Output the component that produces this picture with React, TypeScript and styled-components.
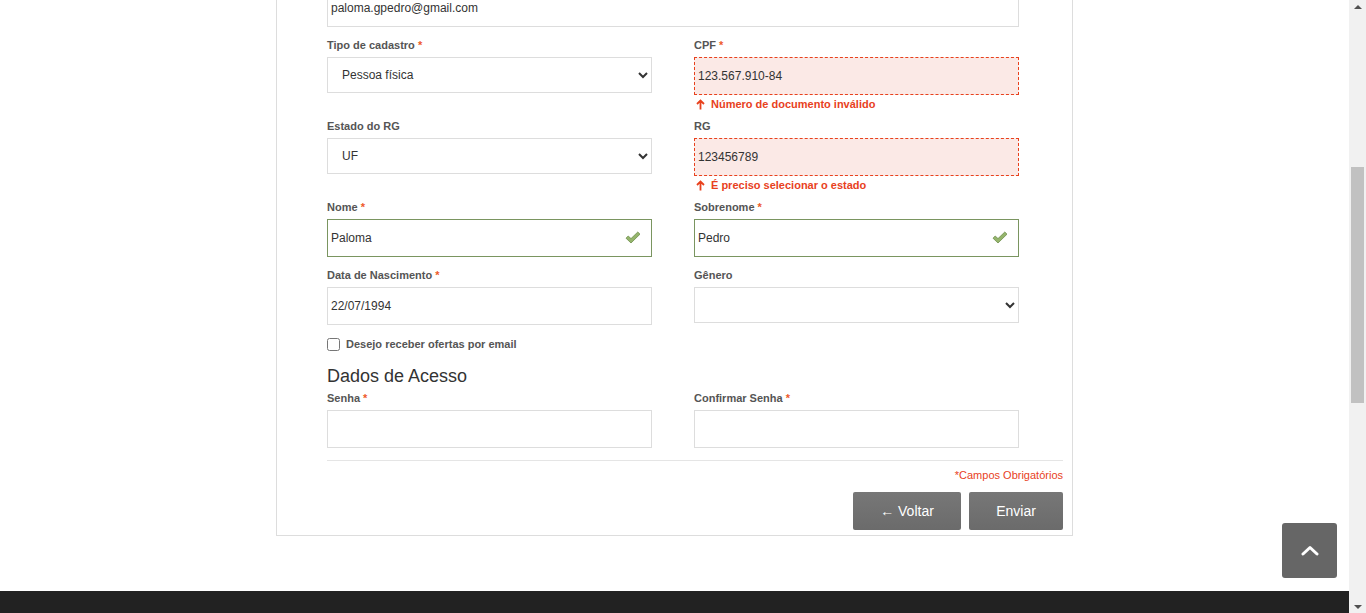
import styled, { createGlobalStyle } from "styled-components";

const GlobalStyle = createGlobalStyle`
  html, body {
    margin: 0;
    padding: 0;
    height: 613px;
    overflow: hidden;
    background: #fff;
    font-family: "Liberation Sans", Arial, sans-serif;
  }
  * { box-sizing: border-box; }
`;

const Page = styled.div`
  display: flex;
  height: 613px;
`;

const Main = styled.div`
  flex: 1;
  display: flex;
  flex-direction: column;
  overflow: hidden;
  position: relative;
`;

const Content = styled.div`
  flex: 1;
  display: flex;
  justify-content: center;
  align-items: flex-start;
  overflow: hidden;
`;

const Footer = styled.footer`
  height: 22px;
  background: #222;
`;

const ScrollTrack = styled.div`
  width: 17px;
  background: #f1f1f1;
  display: flex;
  flex-direction: column;
  align-items: center;
  padding: 5px 0 4px;
`;

const ScrollArrow = styled.div<{ $down?: boolean }>`
  width: 0;
  height: 0;
  border-left: 4px solid transparent;
  border-right: 4px solid transparent;
  ${(p) =>
    p.$down
      ? "border-top: 4px solid #505050; margin-top: auto;"
      : "border-bottom: 4px solid #505050;"}
`;

const ScrollThumb = styled.div`
  width: 13px;
  height: 236px;
  background: #c1c1c1;
  margin-top: 158px;
`;

/* scrolled card: top edge is above the viewport */
const Card = styled.div`
  width: 797px;
  margin-top: -50px;
  border: 1px solid #ddd;
  border-top: none;
  padding: 39px 9px 5px 50px;
  background: #fff;
`;

const Grid = styled.div`
  display: grid;
  grid-template-columns: 367px 1fr;
`;

const Field = styled.div<{ $wide?: boolean }>`
  margin-bottom: 11px;
  ${(p) => (p.$wide ? "grid-column: 1 / span 2;" : "")}
`;

const Label = styled.div`
  font-size: 11px;
  line-height: 14px;
  font-weight: bold;
  color: #555;
  margin-bottom: 5px;
`;

const Req = styled.span`
  color: #ee5a2a;
`;

const InputWrap = styled.div`
  position: relative;
  width: 325px;
`;

const TextInput = styled.input<{ $state?: "error" | "ok"; $wide?: boolean }>`
  display: block;
  width: ${(p) => (p.$wide ? "692px" : "325px")};
  height: 38px;
  padding: 0 3px;
  font-family: "Liberation Sans", Arial, sans-serif;
  font-size: 12px;
  color: #333;
  outline: none;
  border: 1px solid #ddd;
  background: #fff;
  ${(p) =>
    p.$state === "error"
      ? "border: 1px dashed #e8411d; background: #fbe9e6;"
      : p.$state === "ok"
      ? "border: 1px solid #7a9560;"
      : ""}
`;

const Select = styled.select<{ $pad?: number }>`
  display: block;
  width: 325px;
  height: 36px;
  padding: 0 6px 0 ${(p) => p.$pad ?? 10}px;
  font-family: "Liberation Sans", Arial, sans-serif;
  font-size: 12px;
  color: #333;
  border: 1px solid #ddd;
  border-radius: 0;
  background: #fff;
  outline: none;
`;

const Check = styled.svg`
  position: absolute;
  right: 11px;
  top: 12px;
`;

const Error = styled.div`
  display: flex;
  align-items: center;
  gap: 6px;
  font-size: 11px;
  line-height: 14px;
  font-weight: bold;
  color: #e8411d;
  margin-top: 2px;
  margin-bottom: -3px;
  padding-left: 2px;
`;

const CheckRow = styled.label`
  display: flex;
  align-items: center;
  gap: 6px;
  font-size: 11px;
  font-weight: bold;
  color: #555;
  margin-top: 1px;
  height: 14px;
  input {
    margin: 0;
    width: 13px;
    height: 13px;
  }
`;

const Section = styled.h2`
  font-size: 18px;
  line-height: 20px;
  font-weight: normal;
  color: #333;
  margin: 15px 0 5px;
`;

const Rule = styled.hr`
  border: none;
  border-top: 1px solid #e5e5e5;
  margin: 1px 0 7px;
`;

const Note = styled.div`
  text-align: right;
  font-size: 11px;
  line-height: 14px;
  color: #e8411d;
`;

const Actions = styled.div`
  display: flex;
  justify-content: flex-end;
  gap: 8px;
  margin-top: 10px;
`;

const Button = styled.button<{ $w: number }>`
  width: ${(p) => p.$w}px;
  height: 38px;
  border: none;
  border-radius: 2px;
  background: linear-gradient(#777, #6b6b6b);
  color: #fff;
  font-family: "Liberation Sans", Arial, sans-serif;
  font-size: 14px;
  cursor: pointer;
`;

const ToTop = styled.button`
  position: absolute;
  right: 12px;
  bottom: 35px;
  width: 55px;
  height: 55px;
  border: none;
  border-radius: 3px;
  background: #666;
  display: flex;
  align-items: center;
  justify-content: center;
`;

const CheckIcon = () => (
  <Check width="16" height="13" viewBox="0 0 16 13">
    <path
      d="M1 7.2 L3.2 5 L6 7.6 L12.8 1 L15 3.2 L6 12 Z"
      fill="#95b56c"
      stroke="#6f8f4c"
      strokeWidth="0.8"
      strokeLinejoin="round"
    />
  </Check>
);

const UpArrow = () => (
  <svg width="9" height="11" viewBox="0 0 9 11">
    <path d="M4.5 10.5 V1.5 M1 5 L4.5 1.5 L8 5" fill="none" stroke="#e8411d" strokeWidth="1.8" />
  </svg>
);

export default function App() {
  return (
    <>
      <GlobalStyle />
      <Page>
        <Main>
          <Content>
            <Card>
              <Grid>
                <Field $wide>
                  <TextInput $wide defaultValue="paloma.gpedro@gmail.com" />
                </Field>
                <Field>
                  <Label>
                    Tipo de cadastro <Req>*</Req>
                  </Label>
                  <Select defaultValue="pf">
                    <option value="pf">Pessoa física</option>
                    <option value="pj">Pessoa jurídica</option>
                  </Select>
                </Field>
                <Field>
                  <Label>
                    CPF <Req>*</Req>
                  </Label>
                  <TextInput $state="error" defaultValue="123.567.910-84" />
                  <Error>
                    <UpArrow />
                    Número de documento inválido
                  </Error>
                </Field>
                <Field>
                  <Label>Estado do RG</Label>
                  <Select defaultValue="">
                    <option value="">UF</option>
                    <option value="SP">SP</option>
                  </Select>
                </Field>
                <Field>
                  <Label>RG</Label>
                  <TextInput $state="error" defaultValue="123456789" />
                  <Error>
                    <UpArrow />É preciso selecionar o estado
                  </Error>
                </Field>
                <Field>
                  <Label>
                    Nome <Req>*</Req>
                  </Label>
                  <InputWrap>
                    <TextInput $state="ok" defaultValue="Paloma" />
                    <CheckIcon />
                  </InputWrap>
                </Field>
                <Field>
                  <Label>
                    Sobrenome <Req>*</Req>
                  </Label>
                  <InputWrap>
                    <TextInput $state="ok" defaultValue="Pedro" />
                    <CheckIcon />
                  </InputWrap>
                </Field>
                <Field>
                  <Label>
                    Data de Nascimento <Req>*</Req>
                  </Label>
                  <TextInput defaultValue="22/07/1994" />
                </Field>
                <Field>
                  <Label>Gênero</Label>
                  <Select defaultValue="">
                    <option value=""></option>
                    <option value="f">Feminino</option>
                    <option value="m">Masculino</option>
                  </Select>
                </Field>
              </Grid>
              <CheckRow>
                <input type="checkbox" />
                Desejo receber ofertas por email
              </CheckRow>
              <Section>Dados de Acesso</Section>
              <Grid>
                <Field>
                  <Label>
                    Senha <Req>*</Req>
                  </Label>
                  <TextInput type="password" />
                </Field>
                <Field>
                  <Label>
                    Confirmar Senha <Req>*</Req>
                  </Label>
                  <TextInput type="password" />
                </Field>
              </Grid>
              <Rule />
              <Note>*Campos Obrigatórios</Note>
              <Actions>
                <Button $w={108}>← Voltar</Button>
                <Button $w={94}>Enviar</Button>
              </Actions>
            </Card>
          </Content>
          <Footer />
          <ToTop>
            <svg width="18" height="11" viewBox="0 0 18 11">
              <path d="M2 9 L9 2.5 L16 9" fill="none" stroke="#fff" strokeWidth="3" strokeLinecap="round" strokeLinejoin="round" />
            </svg>
          </ToTop>
        </Main>
        <ScrollTrack>
          <ScrollArrow />
          <ScrollThumb />
          <ScrollArrow $down />
        </ScrollTrack>
      </Page>
    </>
  );
}
